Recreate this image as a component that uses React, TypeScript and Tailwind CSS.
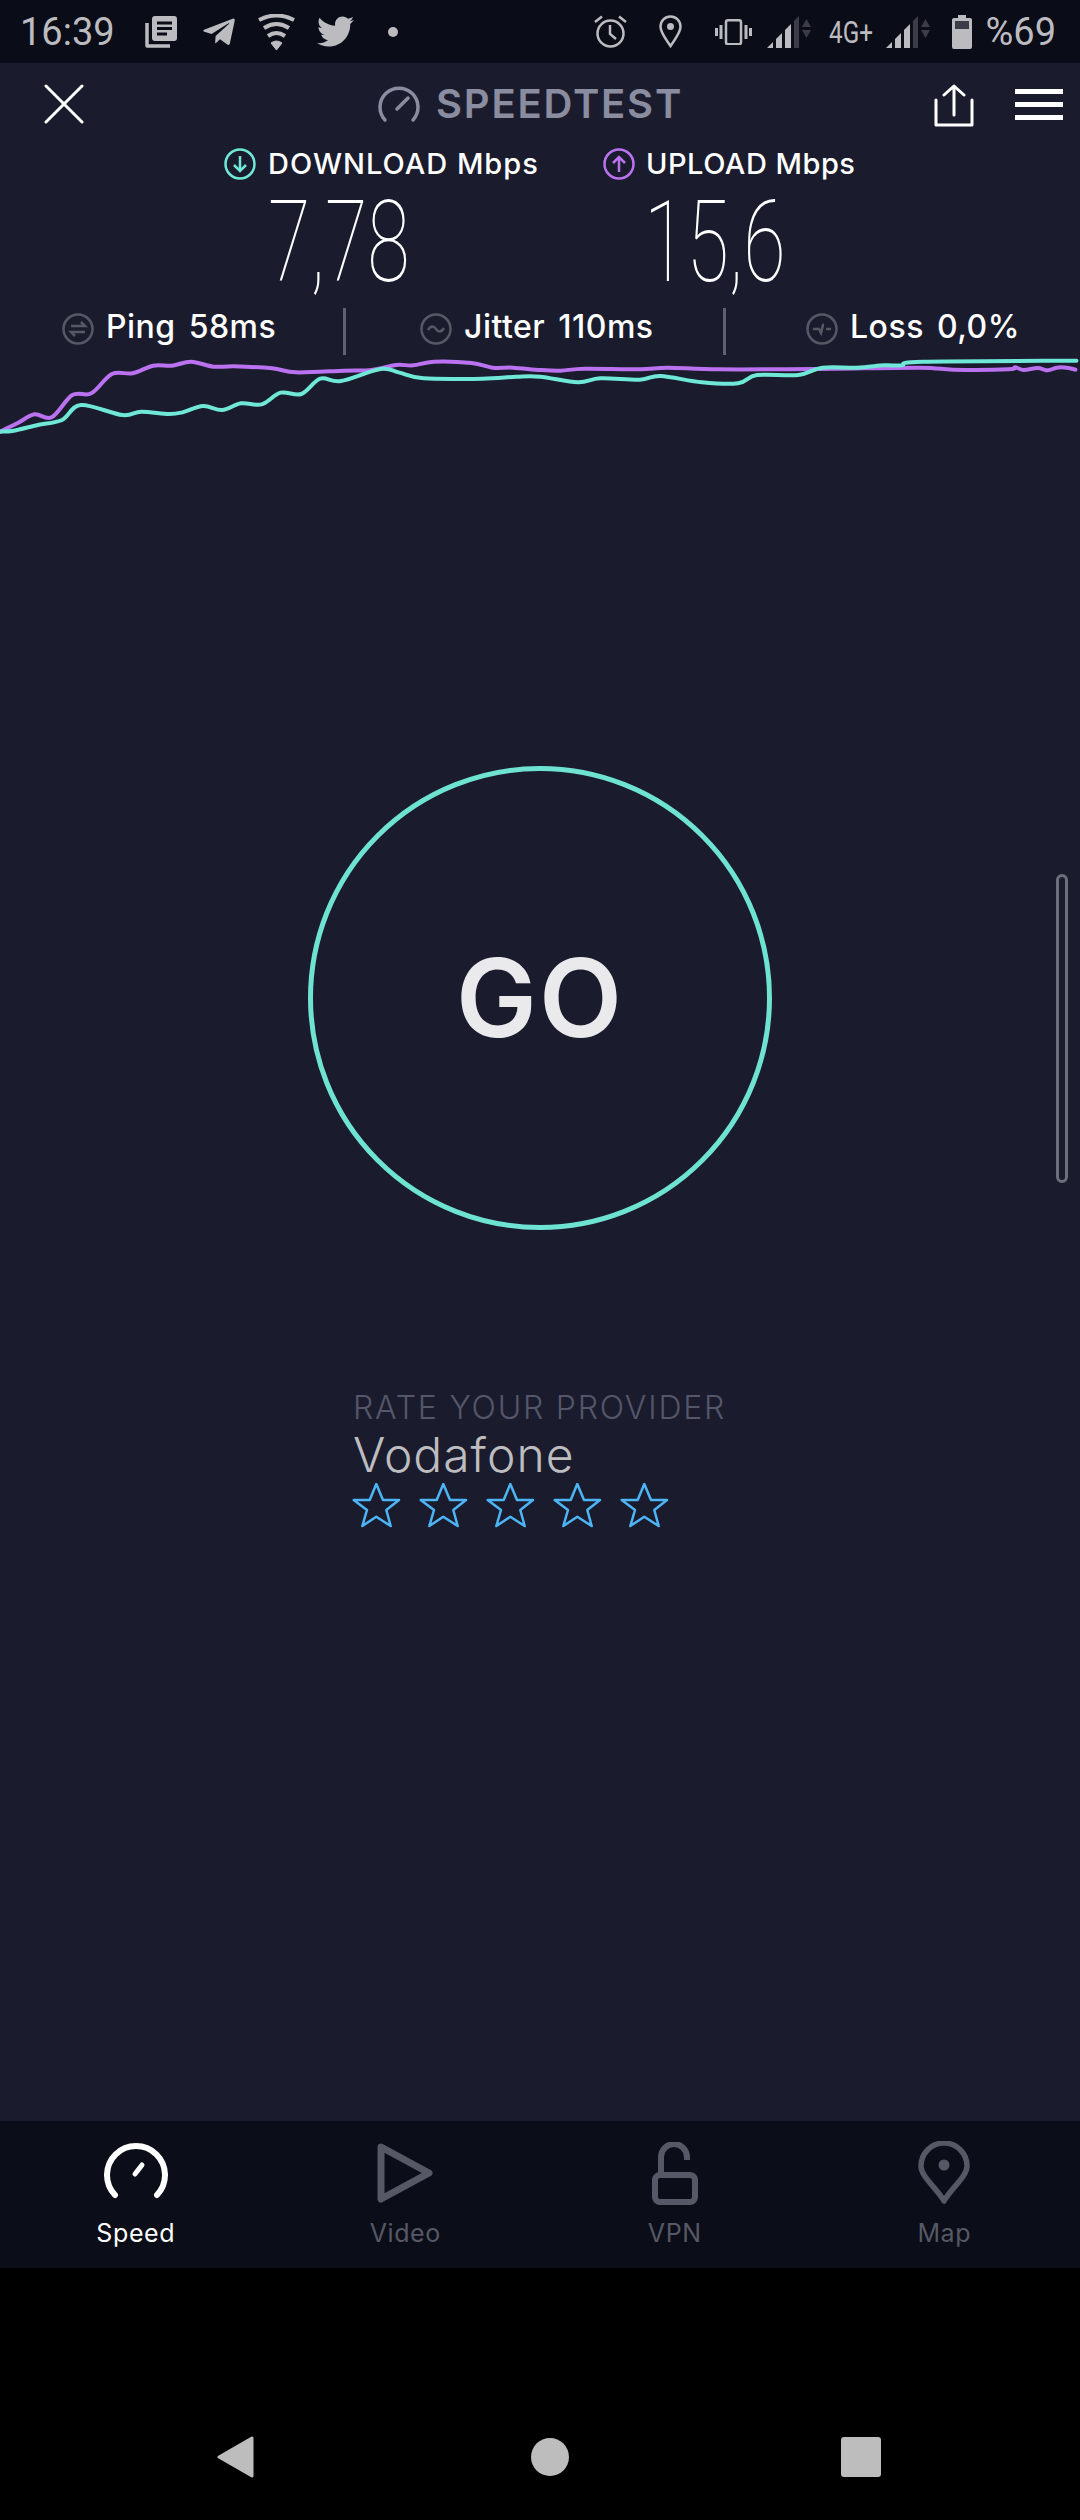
import React from 'react';
import { FaTelegramPlane, FaTwitter } from 'react-icons/fa';

// Chart samples, traced from the picture. Two halves, each [x, y] in its own crop scale.
const toPoints = (left: number[][], right: number[][]) => [
  ...left.map(([x, y]) => [x / 2.904, y / 3 + 130 - 355]),
  ...right.map(([x, y]) => [540 + x / 2.904, y / 3 + 130 - 355]),
];

const smoothPath = (pts: number[][]) => {
  let d = `M${pts[0][0]} ${pts[0][1]}`;
  for (let i = 0; i < pts.length - 1; i++) {
    const p0 = pts[i - 1] || pts[i];
    const p1 = pts[i];
    const p2 = pts[i + 1];
    const p3 = pts[i + 2] || p2;
    const c1x = p1[0] + (p2[0] - p0[0]) / 6;
    const c1y = p1[1] + (p2[1] - p0[1]) / 6;
    const c2x = p2[0] - (p3[0] - p1[0]) / 6;
    const c2y = p2[1] - (p3[1] - p1[1]) / 6;
    d += ` C${c1x} ${c1y} ${c2x} ${c2y} ${p2[0]} ${p2[1]}`;
  }
  return d;
};

const uploadLine = toPoints(
  [[0, 905], [50, 880], [100, 853], [150, 862], [210, 795], [265, 790], [325, 732], [385, 730], [445, 707], [500, 707], [555, 695], [620, 710], [680, 709], [790, 715], [860, 727], [1000, 722], [1080, 720], [1150, 705], [1200, 706], [1260, 695], [1370, 699], [1430, 713], [1490, 713]],
  [[0, 720], [60, 722], [130, 716], [290, 718], [370, 713], [520, 718], [800, 717], [1100, 713], [1200, 719], [1360, 718], [1380, 712], [1405, 720], [1445, 714], [1475, 721], [1500, 713], [1530, 713], [1555, 719]],
);

const downloadLine = toPoints(
  [[0, 905], [40, 902], [110, 885], [180, 870], [235, 825], [355, 855], [410, 845], [490, 852], [530, 847], [590, 828], [645, 840], [700, 820], [760, 823], [815, 788], [875, 792], [930, 746], [990, 753], [1105, 717], [1160, 728], [1230, 745], [1400, 746], [1500, 740]],
  [[0, 740], [110, 757], [175, 745], [290, 749], [350, 738], [470, 757], [575, 760], [630, 735], [750, 735], [820, 713], [920, 713], [1000, 706], [1050, 706], [1110, 695], [1558, 692]],
);

const SignalIcon = () => (
  <svg width="45" height="32" viewBox="0 0 45 32" fill="none">
    <path d="M0 32 L6 26 V32 Z" fill="#bcbcc0" />
    <path d="M9 23 L15 17 V32 H9 Z" fill="#bcbcc0" />
    <path d="M18 14 L24 8 V32 H18 Z" fill="#bcbcc0" />
    <path d="M27 5 L32 0 V32 H27 Z" fill="#3b3c47" />
    <path d="M39.500 3 L44 11 H35 Z" fill="#3b3c47" />
    <path d="M35 14 H44 L39.500 22 Z" fill="#3b3c47" />
  </svg>
);

const StatusBar = () => (
  <div className="h-[63px] bg-[#0a0c17] flex items-center justify-between pl-[20px] pr-[24px] text-[#bcbcc0] font-[Roboto,sans-serif]">
    <div className="flex items-center">
      <span className="text-[38px] leading-none w-[92px]">16:39</span>
      <svg className="ml-[33px]" width="32" height="33" viewBox="0 0 32 33" fill="none">
        <path d="M2 8 V31 H25" stroke="#bcbcc0" strokeWidth="3.500" strokeLinejoin="round" />
        <rect x="7" y="1" width="25" height="25" rx="3" fill="#bcbcc0" />
        <path d="M12 8 H27 M12 13.500 H27 M12 19 H22" stroke="#0a0c17" strokeWidth="3" />
      </svg>
      <FaTelegramPlane className="ml-[24px]" size={36} color="#bcbcc0" />
      <svg className="ml-[21px]" width="37" height="36" viewBox="0 0 37 36" fill="none" stroke="#bcbcc0" strokeWidth="4">
        <path d="M1 6 Q18.500 -3 36 6" />
        <path d="M6 14 Q18.500 6 31 14" />
        <path d="M10 22 Q18.500 16 27 22" />
        <path d="M18.500 36 L13 29 Q18.500 25 24 29 Z" fill="#bcbcc0" strokeWidth="1" />
      </svg>
      <FaTwitter className="ml-[22px]" size={37} color="#bcbcc0" />
      <span className="ml-[34px] w-[10px] h-[10px] rounded-full bg-[#bcbcc0]" />
    </div>
    <div className="flex items-center">
      <svg width="33" height="33" viewBox="0 0 33 33" fill="none" stroke="#bcbcc0" strokeWidth="2.500">
        <circle cx="16.500" cy="18.500" r="13" />
        <path d="M16 10 V19 L22 24" />
        <path d="M1 7 L8 1.500 M32 7 L25 1.500" />
      </svg>
      <svg className="ml-[32px]" width="23" height="33" viewBox="0 0 23 33" fill="none">
        <path d="M11.500 31 C7 24 1.500 18 1.500 11.500 A10 10 0 0 1 21.500 11.500 C21.500 18 16 24 11.500 31 Z" stroke="#bcbcc0" strokeWidth="2.500" />
        <circle cx="11.500" cy="11.500" r="3.500" fill="#bcbcc0" />
      </svg>
      <svg className="ml-[33px]" width="37" height="26" viewBox="0 0 37 26" fill="none" stroke="#bcbcc0" strokeWidth="2.500">
        <rect x="11" y="1.250" width="15" height="24" rx="2" />
        <path d="M6 6 V20 M1.500 9 V17 M31 6 V20 M35.500 9 V17" strokeWidth="3" />
      </svg>
      <div className="ml-[15px]"><SignalIcon /></div>
      <span className="ml-[17px] w-[50px] text-[32px] leading-none scale-x-[0.76] origin-left whitespace-nowrap">4G+</span>
      <div className="ml-[7px]"><SignalIcon /></div>
      <svg className="ml-[21px]" width="20" height="34" viewBox="0 0 20 34">
        <path d="M6 0 H14 V3 H18 Q20 3 20 5 V32 Q20 34 18 34 H2 Q0 34 0 32 V5 Q0 3 2 3 H6 Z" fill="#bcbcc0" />
        <rect x="3" y="6" width="14" height="8" fill="#3b3c47" />
      </svg>
      <span className="ml-[13px] text-[38px] leading-none">%69</span>
    </div>
  </div>
);

const ArrowBadge = ({ up, color }: { up?: boolean; color: string }) => (
  <svg width="32" height="32" viewBox="0 0 32 32" fill="none" stroke={color} strokeWidth="2.500">
    <circle cx="16" cy="16" r="14.500" />
    {up ? <path d="M16 24 V9 M10 15 L16 9 L22 15" /> : <path d="M16 8 V23 M10 17 L16 23 L22 17" />}
  </svg>
);

const StatBadge = ({ children }: { children: React.ReactNode }) => (
  <svg width="32" height="32" viewBox="0 0 32 32" fill="none" stroke="#565866" strokeWidth="2.500">
    <circle cx="16" cy="16" r="14.500" />
    {children}
  </svg>
);

const Stat = ({ label, value, badge }: { label: string; value: string; badge: React.ReactNode }) => (
  <div className="flex items-center gap-[12px] pb-[6px] text-white text-[32px] leading-none tracking-[0.5px] font-medium whitespace-nowrap">
    {badge}
    <span className="pb-[3px]">{label}</span>
    <span className="ml-[1px] pb-[3px]">{value}</span>
  </div>
);

const Star = () => (
  <svg width="49" height="45" viewBox="-1 -1 49 45" fill="none" stroke="#4db5f5" strokeWidth="2.500" strokeLinejoin="round">
    <polygon points="23.300,0 30,16 46,16 33.300,26 37.700,42 23.300,32.700 9.300,42 14,26 0.700,16 16.700,16" />
  </svg>
);

const tabs = [
  {
    label: 'Speed',
    active: true,
    icon: (
      <svg className="mb-[5px]" width="64" height="56" viewBox="0 0 64 56" fill="none" stroke="currentColor" strokeWidth="6" strokeLinecap="round">
        <path d="M11 52 A29 29 0 1 1 53 52" />
        <path d="M38 22 L31 31" strokeWidth="5" />
      </svg>
    ),
  },
  {
    label: 'Video',
    icon: (
      <svg width="56" height="60" viewBox="0 0 56 60" fill="none" stroke="currentColor" strokeWidth="7" strokeLinejoin="round">
        <path d="M4 4 L52 30 L4 56 Z" />
      </svg>
    ),
  },
  {
    label: 'VPN',
    icon: (
      <svg width="46" height="63" viewBox="0 0 46 63" fill="none" stroke="currentColor" strokeWidth="6">
        <rect x="3" y="33" width="40" height="27" rx="5" />
        <path d="M9 33 V15 A13 13 0 0 1 35 15 V18" />
      </svg>
    ),
  },
  {
    label: 'Map',
    icon: (
      <svg width="52" height="64" viewBox="0 0 52 64" fill="none">
        <path d="M26 60 C18 46 3 36 3 25 A23 23 0 0 1 49 25 C49 36 34 46 26 60 Z" stroke="currentColor" strokeWidth="5.500" strokeLinejoin="round" />
        <circle cx="26" cy="24" r="5.500" fill="currentColor" />
      </svg>
    ),
  },
];

export default function App() {
  return (
    <div className="relative w-[1080px] h-[2520px] flex flex-col bg-black font-[Inter,sans-serif] overflow-hidden">
      <StatusBar />

      <main className="flex-1 bg-[#1a1c2d] flex flex-col">
        {/* top bar */}
        <div className="h-[77px] flex items-start pt-[21px] pl-[44px]">
          <svg width="40" height="40" viewBox="0 0 40 40" stroke="white" strokeWidth="3" strokeLinecap="round">
            <path d="M2 2 L38 38 M38 2 L2 38" />
          </svg>
          <div className="ml-[294px] w-[309px] flex items-center gap-[16px]">
            <svg width="42" height="37" viewBox="0 0 42 37" fill="none" stroke="#8a8c9f" strokeWidth="3.500" strokeLinecap="round">
              <path d="M7 34 A19 19 0 1 1 35 34" />
              <path d="M30 12 L19 23" />
            </svg>
            <span className="text-[40px] leading-none font-semibold tracking-[1.8px] text-[#8a8c9f]">SPEEDTEST</span>
          </div>
          <svg className="ml-[247px]" width="40" height="43" viewBox="0 0 40 43" fill="none" stroke="white" strokeWidth="3" strokeLinecap="round" strokeLinejoin="round">
            <path d="M2 16 V41 H38 V16" />
            <path d="M20 31 V2 M10 11 L20 2 L30 11" />
          </svg>
          <div className="ml-[41px] mt-[5px] w-[48px] flex flex-col gap-[8px]">
            <span className="h-[5px] bg-white" />
            <span className="h-[5px] bg-white" />
            <span className="h-[5px] bg-white" />
          </div>
        </div>

        {/* download / upload labels */}
        <div className="h-[46px] pt-[1px] flex items-center pl-[224px] text-white text-[29px] leading-none font-medium">
          <div className="w-[379px] flex items-center gap-[12px]">
            <ArrowBadge color="#6fe8d8" />
            <span className="tracking-[1px]">DOWNLOAD Mbps</span>
          </div>
          <div className="flex items-center gap-[11px]">
            <ArrowBadge up color="#bb72f0" />
            <span className="tracking-[0.5px]">UPLOAD Mbps</span>
          </div>
        </div>

        {/* values */}
        <div className="h-[122px] flex items-start pl-[268px] font-[Roboto,sans-serif] font-thin text-white text-[114px] leading-[112px]">
          <span className="w-[376px] origin-left scale-x-[0.68]">7,78</span>
          <span className="origin-left scale-x-[0.68]">15,6</span>
        </div>

        {/* ping, jitter, loss */}
        <div className="grid grid-cols-[346px_380px_1fr] h-[47px]">
          <div className="border-r-[3px] border-[#5f6070] pl-[62px] flex items-center">
            <Stat
              label="Ping"
              value="58ms"
              badge={
                <StatBadge>
                  <path d="M9 13 H23 L19 9 M23 19 H9 L13 23" strokeWidth="2.500" />
                </StatBadge>
              }
            />
          </div>
          <div className="border-r-[3px] border-[#5f6070] pl-[74px] flex items-center">
            <Stat
              label="Jitter"
              value="110ms"
              badge={
                <StatBadge>
                  <path d="M8 17 C11 12 14 13 16 16 C18 19 21 20 24 15" strokeWidth="2.500" />
                </StatBadge>
              }
            />
          </div>
          <div className="pl-[80px] flex items-center">
            <Stat
              label="Loss"
              value="0,0%"
              badge={
                <StatBadge>
                  <path d="M7 16 H13 L15 20 L17 12 H18 M20 16 H25" strokeWidth="2.500" />
                </StatBadge>
              }
            />
          </div>
        </div>

        {/* speed chart */}
        <svg className="block" width="1080" height="85" viewBox="0 0 1080 85" fill="none" strokeWidth="4" strokeLinecap="round" strokeLinejoin="round">
          <path d={smoothPath(uploadLine)} stroke="#bb72f0" />
          <path d={smoothPath(downloadLine)} stroke="#6fe8d8" />
        </svg>

        {/* go button */}
        <div className="mt-[326px] mx-auto w-[464px] h-[464px] rounded-full border-[5px] border-[#6fe3d2] flex items-center justify-center">
          <span className="text-[108px] leading-none tracking-[2px] font-semibold text-[#eaeaec]">GO</span>
        </div>

        {/* provider rating */}
        <div className="mt-[160px] pl-[353px] flex flex-col">
          <span className="text-[32px] leading-[36px] tracking-[1.8px] font-light text-[#55566a]">RATE YOUR PROVIDER</span>
          <span className="mt-[1px] text-[48px] leading-[56px] tracking-[1px] font-light text-[#bdbdc0]">Vodafone</span>
          <div className="flex gap-[18px] -ml-[1px]">
            <Star />
            <Star />
            <Star />
            <Star />
            <Star />
          </div>
        </div>
      </main>

      {/* tab bar */}
      <nav className="h-[147px] bg-[#0b0d18] grid grid-cols-4 px-[1px] pt-[19px]">
        {tabs.map((tab) => (
          <div key={tab.label} className={`flex flex-col items-center ${tab.active ? 'text-white' : 'text-[#565866]'}`}>
            <div className="h-[66px] flex items-center">{tab.icon}</div>
            <span className="mt-[12px] text-[25px] leading-[30px] tracking-[0.6px]">{tab.label}</span>
          </div>
        ))}
      </nav>

      {/* android nav bar */}
      <div className="h-[252px] flex items-start pt-[168px] pl-[217px]">
        <svg width="37" height="42" viewBox="0 0 37 42">
          <path d="M35 2 V40 L2 21 Z" fill="#bdbdbd" stroke="#bdbdbd" strokeWidth="3" strokeLinejoin="round" />
        </svg>
        <span className="ml-[277px] mt-[2px] w-[38px] h-[38px] rounded-full bg-[#bdbdbd]" />
        <span className="ml-[272px] mt-[1px] w-[40px] h-[40px] rounded-[3px] bg-[#bdbdbd]" />
      </div>

      {/* scroll indicator */}
      <div className="absolute left-[1056px] top-[874px] w-[12px] h-[309px] rounded-full border-[3px] border-[#6d6e7c]" />
    </div>
  );
}
